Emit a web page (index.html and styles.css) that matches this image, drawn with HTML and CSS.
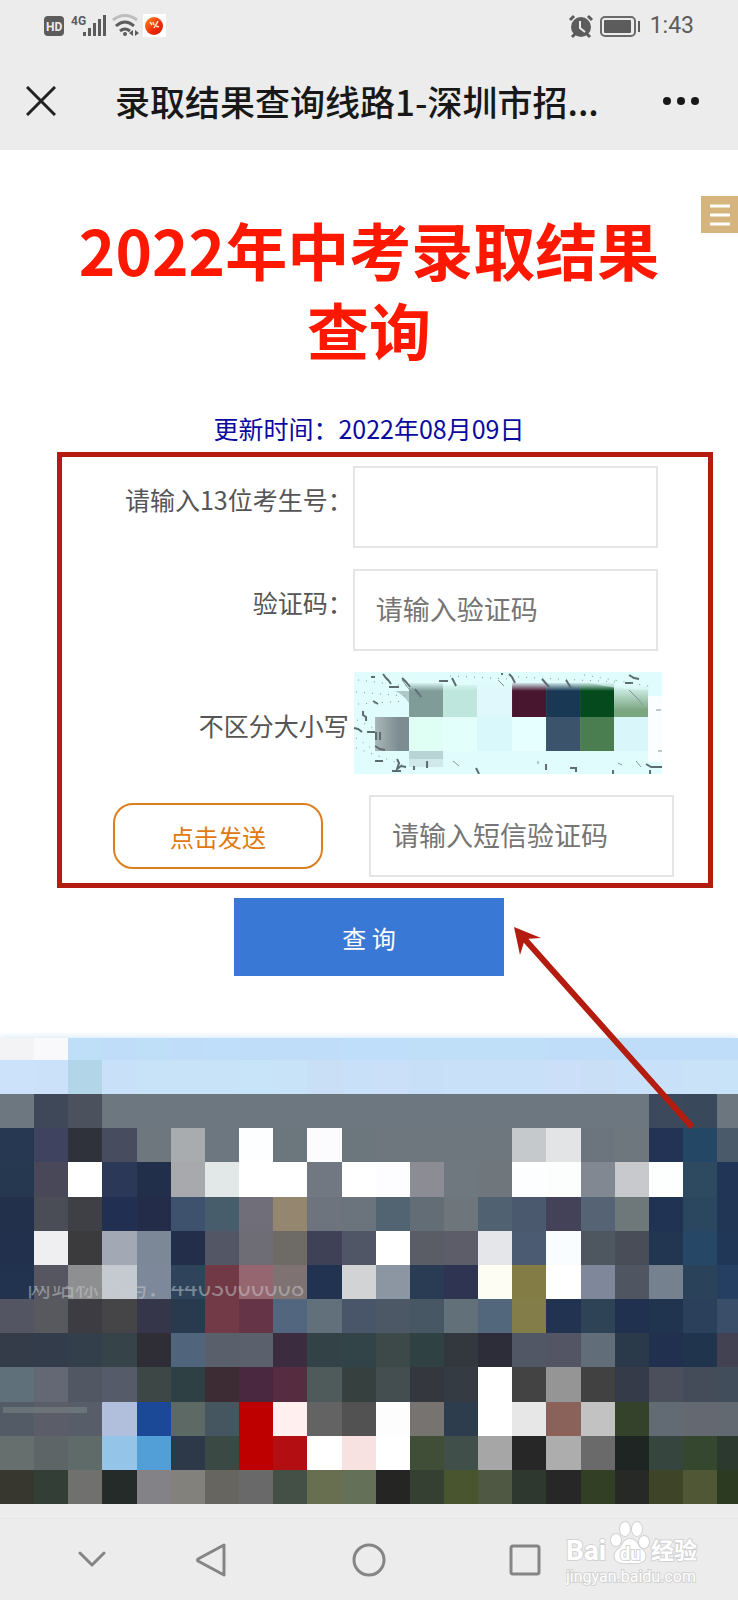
FILE: index.html
```html
<!DOCTYPE html>
<html lang="zh-CN">
<head>
  <meta charset="UTF-8" />
  <meta name="viewport" content="width=device-width, initial-scale=1.0"/>
  <title>录取结果查询线路1-深圳市招生考试办公室</title>
  <link rel="stylesheet" href="styles.css">
</head>
<body>

  <header class="top">
    <div class="status">
      <svg class="status-left" viewBox="0 0 126 30" width="126" height="30" fill="#5c5c5c">
        <rect x="1" y="5" width="20" height="20" rx="4"/>
        <text class="hd" x="3" y="20">HD</text>
        <text class="net" x="28" y="14">4G</text>
        <path d="M40 21h3v4h-3zM45 17h3v8h-3zM50 12h3v13h-3zM55 8h3v17h-3zM60 4h3v21h-3z"/>
        <g fill="none" stroke-width="3">
          <path stroke="#bdbdbd" d="M70 9q12 -9 24 0"/>
          <path stroke="#5c5c5c" d="M73 15q9 -8 18 0M77 20q5 -4 10 0"/>
        </g>
        <circle cx="82" cy="23" r="2"/>
        <path d="M90 19v6l-4 -3zM92 19v6l4 -3z"/>
        <rect x="100" y="3" width="23" height="23" fill="#fff"/>
        <circle cx="111" cy="15" r="9" fill="url(#ball)"/>
        <path fill="none" stroke="#ffe8c8" stroke-width="1.5" d="M107 11l2 3M110 11l1 3M115 10l-4 7M113 15l3 1"/>
        <defs>
          <linearGradient id="ball" x1="0" y1="0" x2="1" y2="1">
            <stop offset="0" stop-color="#ff8a1c"/>
            <stop offset="0.6" stop-color="#ee2b08"/>
            <stop offset="1" stop-color="#d81804"/>
          </linearGradient>
        </defs>
      </svg>
      <div class="status-right">
        <svg viewBox="0 0 74 26" width="74" height="26">
          <circle cx="13" cy="14" r="10" fill="#5c5c5c"/>
          <path fill="none" stroke="#5c5c5c" stroke-width="3" d="M2 7l4 -4M24 7l-4 -4M7 21l-3 3M19 21l3 3"/>
          <path fill="none" stroke="#ececec" stroke-width="2" d="M12 8v7l5 4"/>
          <rect x="33" y="4" width="34" height="19" rx="4" fill="none" stroke="#6a6a6a" stroke-width="2"/>
          <rect x="36" y="7" width="27" height="13" rx="1" fill="#5c5c5c"/>
          <rect x="70" y="8" width="2" height="11" fill="#5c5c5c"/>
        </svg>
        <span class="time">1:43</span>
      </div>
    </div>
    <div class="navbar">
      <button class="icon-btn" aria-label="关闭">
        <svg viewBox="0 0 30 30" width="30" height="30"><path d="M1 1l28 28M29 1L1 29" stroke="#222" stroke-width="3"/></svg>
      </button>
      <div class="nav-title">录取结果查询线路1-深圳市招...</div>
      <button class="icon-btn" aria-label="更多">
        <svg viewBox="0 0 38 10" width="38" height="10" fill="#181818"><circle cx="5" cy="5" r="4"/><circle cx="19" cy="5" r="4"/><circle cx="33" cy="5" r="4"/></svg>
      </button>
    </div>
  </header>

  <main class="page">
    <button class="menu-btn" aria-label="菜单">
      <svg viewBox="0 0 20 22" width="20" height="22"><path d="M1 2h18M1 11h18M1 20h18" stroke="#fff" stroke-width="3" stroke-linecap="round"/></svg>
    </button>

    <h1>2022年中考录取结果查询</h1>
    <p class="updated">更新时间：2022年08月09日</p>

    <form id="queryForm">
      <div class="fields">
        <div class="row">
          <label for="ksh">请输入13位考生号：</label>
          <input type="text" id="ksh" maxlength="13" />
        </div>
        <div class="row">
          <label for="yzm">验证码：</label>
          <input type="text" id="yzm" placeholder="请输入验证码" />
        </div>
        <div class="row">
          <span class="note">不区分大小写</span>
          <svg class="captcha" viewBox="0 0 308 102">
            <defs>
              <linearGradient id="fade" x1="0" y1="0" x2="0" y2="1">
                <stop offset="0" stop-color="#e0fcfc"/>
                <stop offset="1" stop-color="#e0fcfc" stop-opacity="0"/>
              </linearGradient>
              <linearGradient id="gray" x1="0" y1="0" x2="1" y2="0">
                <stop offset="0" stop-color="#a9b7ba"/>
                <stop offset="0.7" stop-color="#7d8c90"/>
              </linearGradient>
            </defs>
            <rect width="308" height="102" fill="#e0fcfc"/>
            <path fill="#809c98" d="M55 11h34v34H55z"/>
            <path fill="#bfe6dc" d="M89 13h34v32H89z"/>
            <path fill="#e0f8fc" d="M123 11h35v34h-35z"/>
            <path fill="#48162f" d="M158 11h34v34h-34z"/>
            <path fill="#193853" d="M192 11h34v34h-34z"/>
            <path fill="#054a1c" d="M226 11h34v34h-34z"/>
            <path fill="#7aa680" d="M260 14h34v31h-34z"/>
            <path fill="url(#gray)" d="M21 45h34v34H21z"/>
            <path fill="#dffef4" d="M55 45h34v34H55z"/>
            <path fill="#e2fffc" d="M89 45h34v34H89z"/>
            <path fill="#d9f8fc" d="M123 45h35v34h-35z"/>
            <path fill="#e6ffff" d="M158 45h34v34h-34z"/>
            <path fill="#3b546c" d="M192 45h34v34h-34z"/>
            <path fill="#4a7d50" d="M226 45h34v34h-34z"/>
            <path fill="#d9f7fb" d="M260 45h34v34h-34z"/>
            <path fill="#fafefe" d="M294 24h14v66h-14z"/>
            <path fill="#b9d4d5" d="M55 79h34v8H55z"/>
            <path fill="#cfe8e9" d="M55 87h34v8H55z"/>
            <rect x="55" y="10" width="205" height="9" fill="url(#fade)"/>
            <rect x="260" y="12" width="34" height="26" fill="url(#fade)"/>
            <path fill="#e0fcfc" d="M232 10h62v8q-30 0 -62 -8z" opacity="0.6"/>
            <path fill="#8fa9a9" d="M41 19h14v12q-5 -8 -14 -12z" opacity="0.6"/>
            <g fill="none" stroke="#5c6c70" stroke-width="2">
              <path d="M17 5h4M29 2l3 4l2 2l3 4M48 6l4 4l4 5M35 15h10M85 9h9M98 6l2 4l2 4M61 17l6 8M19 29l5 3M9 39v4l3 2v4M0 56l4 1l4 3M13 60h8M22 60v8M26 60v8M21 74l5 3l5 1"/>
              <path d="M21 89h8M43 87l2 4l-2 6l4 -3l5 1M38 99h9M60 94v4M73 89v7M122 96l3 6"/>
              <path d="M148 1v2M155 2l3 3l3 6M188 7l7 8M212 8l5 8M275 3l5 3l5 1M271 11h8"/>
              <path d="M192 92v6M216 96h6v4M259 98v4M292 92l5 3h11M296 98v4"/>
            </g>
            <g fill="none" stroke="#7f9598">
              <path d="M48 8l10 13l8 3M144 8l6 6M275 18l8 8l6 7M302 38h5M304 79h4M99 89l6 5M184 89v3M264 91l4 2M282 89l5 6M58 16l10 12"/>
              <path stroke-dasharray="1 7" d="M4 8l50 6M2 20l50 4M4 32l48 -3M3 48l16 8M2 66l18 12M2 76l50 18M96 4l60 3M164 5l100 5M230 3l70 12"/>
            </g>
          </svg>
        </div>
        <div class="row row-sms">
          <div class="send-cell"><button type="button" class="send-btn">点击发送</button></div>
          <input type="text" id="sms" aria-label="短信验证码" placeholder="请输入短信验证码" />
        </div>
      </div>
      <button type="submit" class="query-btn">查 询</button>
    </form>

    <svg class="arrow" viewBox="0 0 190 210" width="190" height="210">
      <path d="M11 12L182 204" stroke="#b31c0e" stroke-width="6"/>
      <path d="M4 4L31 15L15 16L10 32Z" fill="#b31c0e"/>
    </svg>

    <svg class="mosaic" id="mosaic" viewBox="0 0 738 466">
      <defs>
        <clipPath id="lower"><rect x="0" y="248" width="320" height="16"/></clipPath>
      </defs>
      <g id="cells" shape-rendering="crispEdges"></g>
      <text class="site-code" x="27" y="258" clip-path="url(#lower)">网站标识码：4403000008</text>
      <path d="M3 369h84v6H3z" fill="#808a88" opacity="0.5"/>
    </svg>
  </main>

  <footer class="bottom">
    <nav class="sysnav">
      <button class="icon-btn" aria-label="收起"><svg viewBox="0 0 28 18" width="28" height="18"><path d="M2 2l12 12L26 2"/></svg></button>
      <button class="icon-btn" aria-label="返回"><svg viewBox="0 0 32 36" width="32" height="36"><path d="M29 3v30L3 19q-1 -1 0 -2z"/></svg></button>
      <button class="icon-btn" aria-label="主页"><svg viewBox="0 0 36 36" width="36" height="36"><circle cx="18" cy="18" r="15"/></svg></button>
      <button class="icon-btn" aria-label="任务"><svg viewBox="0 0 32 32" width="32" height="32"><rect x="2" y="2" width="28" height="28" rx="2"/></svg></button>
    </nav>
    <svg class="watermark" viewBox="0 0 136 68" width="136" height="68">
      <g fill="#fff" stroke="#d2d2d2" stroke-width="2" paint-order="stroke">
        <text class="wm-big" x="0" y="40">Bai</text>
        <ellipse cx="50" cy="20" rx="5" ry="6"/>
        <ellipse cx="59" cy="9" rx="5" ry="7"/>
        <ellipse cx="71" cy="9" rx="5" ry="7"/>
        <ellipse cx="78" cy="22" rx="5" ry="6"/>
        <path d="M64 19q6 0 9 8q8 5 6 12q-2 5 -15 4q-13 1 -15 -4q-2 -7 6 -12q3 -8 9 -8z"/>
        <text class="wm-du" x="54" y="40">du</text>
        <text class="wm-cn" x="85" y="39">经验</text>
        <text class="wm-url" x="0" y="62">jingyan.baidu.com</text>
      </g>
    </svg>
  </footer>

  <script>
    // first row is shorter, the rest are square cells
    const rows = [
      "f3f3f5 f9f9fc bfdef8 bfddf8 bfdef8 bfddf8 bfdef9 bfddf8 bfddf8 bfddf8 bfdef9 bfdef9 bfdef8 bfdef8 bfdef8 bfdef8 bfddf8 bfddf8 bfddf8 bfddf8 bfddf8 bfddf8",
      "cbe2fa cbe1f9 b2d6e8 c9e1f8 c8e2f8 c8e3f8 c8e3f8 c8e4f8 c8e3f8 c8dff6 c8e1f8 c9e0f8 c8dff8 c8e1f8 c9e1f8 c9e1f8 cbe0f8 c8dff6 c8e1f8 c8e1f8 c9e2f8 c8e2f8",
      "6c777f 3f4858 4b515d 6c777f 6c777f 6c777f 6c777f 6c777f 6c777f 6c777f 6c777f 6c777f 6c777f 6c777f 6c777f 6c777f 6c777f 6c777f 6c777f 3c495c 3a485b 6c767f",
      "273853 40435f 30323b 474c5f 6e777e a8acae 6d777f fdfeff 6c777d fcfcfe 6c777d 6e767e 6e767e 6e777e 6e777e c6c9cb e2e4e5 6c757e 6e777e 233356 234764 4b5a6a",
      "263750 484858 ffffff 2b3858 222f4b a8a9ad e2e7e7 ffffff ffffff 727881 ffffff fdfdff 8c8d94 6f777f 6f777d fcfeff fcfdfd 818891 c8c9cc fdffff 2d4a60 213657",
      "22304c 4a4d56 3f3f46 213052 232c48 3e526e 485d6c 706e79 95866f 6d747e 6b747c 526472 636d75 6f767b 506171 4a596d 434258 556374 6e777a 213352 2b475f 213655",
      "22304d efeff2 3b3b3e a2a8b4 7c8798 232f4a 535664 6e6c74 6e6a66 3f4156 515667 ffffff 5b5d66 5c5d68 e4e6ea 4a5b72 f9fdff 4e5660 494d58 223651 264766 213757",
      "22334f 55565f 8d8f91 c4cacf 7d889b 2f445a 713946 966670 7f7273 213350 d1d3d5 8c96a2 293c54 2f3452 fefdf3 837d45 ffffff 7f889b 505562 76818f 2b425b 243f61",
      "535562 58585f 3c3c42 454547 36364b 293a4e 723a47 663447 53667f 62707b 49566a 4d5867 485764 62707a 52677c 837e49 213350 2f4356 1f314e 20334f 2b405a 3b4e69",
      "343b49 333c4b 333f4b 364349 2f2e37 50657b 5a5f6c 5a616d 3c2c40 334247 334448 3d4848 2f4143 33383f 2d2c39 525766 535564 616e79 2b3a4a 20304e 21344e 424253",
      "60707b 646875 525764 555b68 3c4746 2f4044 3e2c35 4a2840 562d40 4f5b5b 36413f 444e51 35373f 353b43 ffffff 434343 959595 414141 353b48 4b4f5b 454c59 424d5b",
      "525b66 5b5e69 575e69 b1bedc 1c4898 5d6964 455660 be0000 ffefee 636363 525252 fdfdfd 767370 2d3d4d ffffff e7e7e7 8a6259 c2c2c2 35422b 626b73 646971 636971",
      "666f6e 5d6566 5f6b69 94c5e8 529ed7 2d3949 3a4943 be0000 b30f12 ffffff f8e1e1 ffffff 414e37 414f4b a6a6a6 272727 adadad 6a6a6a 1f2522 36463f 35482f 2b392f",
      "38372f 323e36 70706f 252b28 838387 83817c 666560 69696a 444f46 686e50 657059 252624 353f32 48552f 4f5843 2e382e 262726 323f24 272926 3d4428 505735 2d3a22"
    ];
    const firstHeight = 22;
    const size = (466 - firstHeight) / 13;
    const cells = document.getElementById("cells");

    rows.forEach((row, r) => {
      const top = r === 0 ? 0 : Math.round(firstHeight + (r - 1) * size);
      const bottom = Math.round(firstHeight + r * size);
      row.split(" ").forEach((color, c) => {
        const left = Math.round(c * size);
        const rect = document.createElementNS("http://www.w3.org/2000/svg", "rect");
        rect.setAttribute("x", left);
        rect.setAttribute("y", top);
        rect.setAttribute("width", Math.round((c + 1) * size) - left);
        rect.setAttribute("height", bottom - top);
        rect.setAttribute("fill", "#" + color);
        cells.appendChild(rect);
      });
    });

    document.getElementById("queryForm").addEventListener("submit", e => e.preventDefault());
  </script>

</body>
</html>
```
FILE: styles.css
```css
* {
  box-sizing: border-box;
}
body {
  margin: 0;
  background: #fff;
  color: #555;
  font-family: "Noto Sans CJK SC", sans-serif;
  font-size: 25px;
}
button, input {
  font-family: inherit;
}
svg {
  display: block;
}
.icon-btn {
  display: flex;
  padding: 0;
  border: 0;
  background: none;
  cursor: pointer;
}

/* top bars */
.top {
  background: #ececec;
}
.status {
  display: flex;
  justify-content: space-between;
  align-items: center;
  height: 52px;
  padding: 0 44px 0 43px;
}
.hd {
  fill: #ececec;
  font: bold 12px Roboto, sans-serif;
}
.net {
  font: bold 12px Roboto, sans-serif;
}
.status-right {
  display: flex;
  align-items: center;
  gap: 8px;
}
.time {
  color: #5c5c5c;
  font-family: Roboto, sans-serif;
  font-size: 23px;
  line-height: 28px;
}
.navbar {
  display: flex;
  align-items: center;
  height: 98px;
  padding: 0 38px 0 26px;
}
.nav-title {
  flex: 1;
  padding-left: 59px;
  color: #181818;
  font-size: 35px;
  font-weight: 500;
  line-height: 48px;
  white-space: nowrap;
}

/* page */
.page {
  position: relative;
  padding-top: 59px;
}
.menu-btn {
  position: absolute;
  top: 46px;
  right: 0;
  display: flex;
  justify-content: center;
  align-items: center;
  width: 37px;
  height: 37px;
  padding: 0;
  border: 0;
  background: #d5b47e;
}
h1 {
  margin: 0;
  padding: 0 55px;
  color: #ff1800;
  font-size: 62px;
  line-height: 80px;
  text-align: center;
}
.updated {
  margin: 41px 0 6px;
  color: #0a0aa0;
  line-height: 36px;
  text-align: center;
}
.fields {
  display: flex;
  flex-direction: column;
  gap: 21px;
  margin: 0 25px 0 57px;
  padding: 9px 0 6px;
  border: 5px solid #b31c0e;
}
.row {
  display: flex;
}
.row label {
  width: 45%;
  line-height: 66px;
  text-align: right;
}
.row input {
  width: 305px;
  height: 82px;
  padding: 0 21px 4px;
  border: 2px solid #e5e5e5;
  border-radius: 0;
  background: #fff;
  color: #555;
  font-size: 27px;
}
.row input::placeholder {
  color: #757575;
}
.note {
  width: 45%;
  height: 102px;
  padding: 2px 4px 0 0;
  line-height: 102px;
  text-align: right;
}
.captcha {
  width: 48%;
  height: 102px;
}
.row-sms {
  align-items: center;
}
.send-cell {
  display: flex;
  width: 307px;
  padding-left: 51px;
}
.send-btn {
  width: 210px;
  height: 66px;
  border: 2px solid #de7f1f;
  border-radius: 20px;
  background: #fff;
  color: #e07a10;
  font-size: 24px;
}
.query-btn {
  display: block;
  width: 270px;
  height: 78px;
  margin: 10px auto 62px;
  border: 0;
  background: #3a78d6;
  color: #fff;
  font-size: 24px;
}
.arrow {
  position: absolute;
  top: 773px;
  right: 38px;
}
.mosaic {
  width: 100%;
  height: auto;
  box-shadow: 0 -2px 6px #dcedfb;
}
.site-code {
  fill: #c8ccd0;
  font-size: 24px;
  opacity: 0.5;
}

/* system bar */
.bottom {
  position: relative;
  padding-top: 14px;
  background: #ececec;
}
.sysnav {
  display: grid;
  grid-template-columns: 104fr 134fr 182fr 130fr;
  align-items: center;
  justify-items: center;
  height: 82px;
  padding: 0 148px 0 40px;
  border-top: 1px solid #e6e6e6;
}
.sysnav svg {
  fill: none;
  stroke: #858585;
  stroke-width: 3;
  stroke-linecap: round;
  stroke-linejoin: round;
}
.watermark {
  position: absolute;
  top: 16px;
  right: 36px;
}
.wm-big {
  font: bold 28px Roboto, sans-serif;
}
.wm-du {
  font: bold 18px Roboto, sans-serif;
}
.wm-cn {
  font-size: 23px;
  font-weight: bold;
}
.wm-url {
  font: 16px Roboto, sans-serif;
}
```
